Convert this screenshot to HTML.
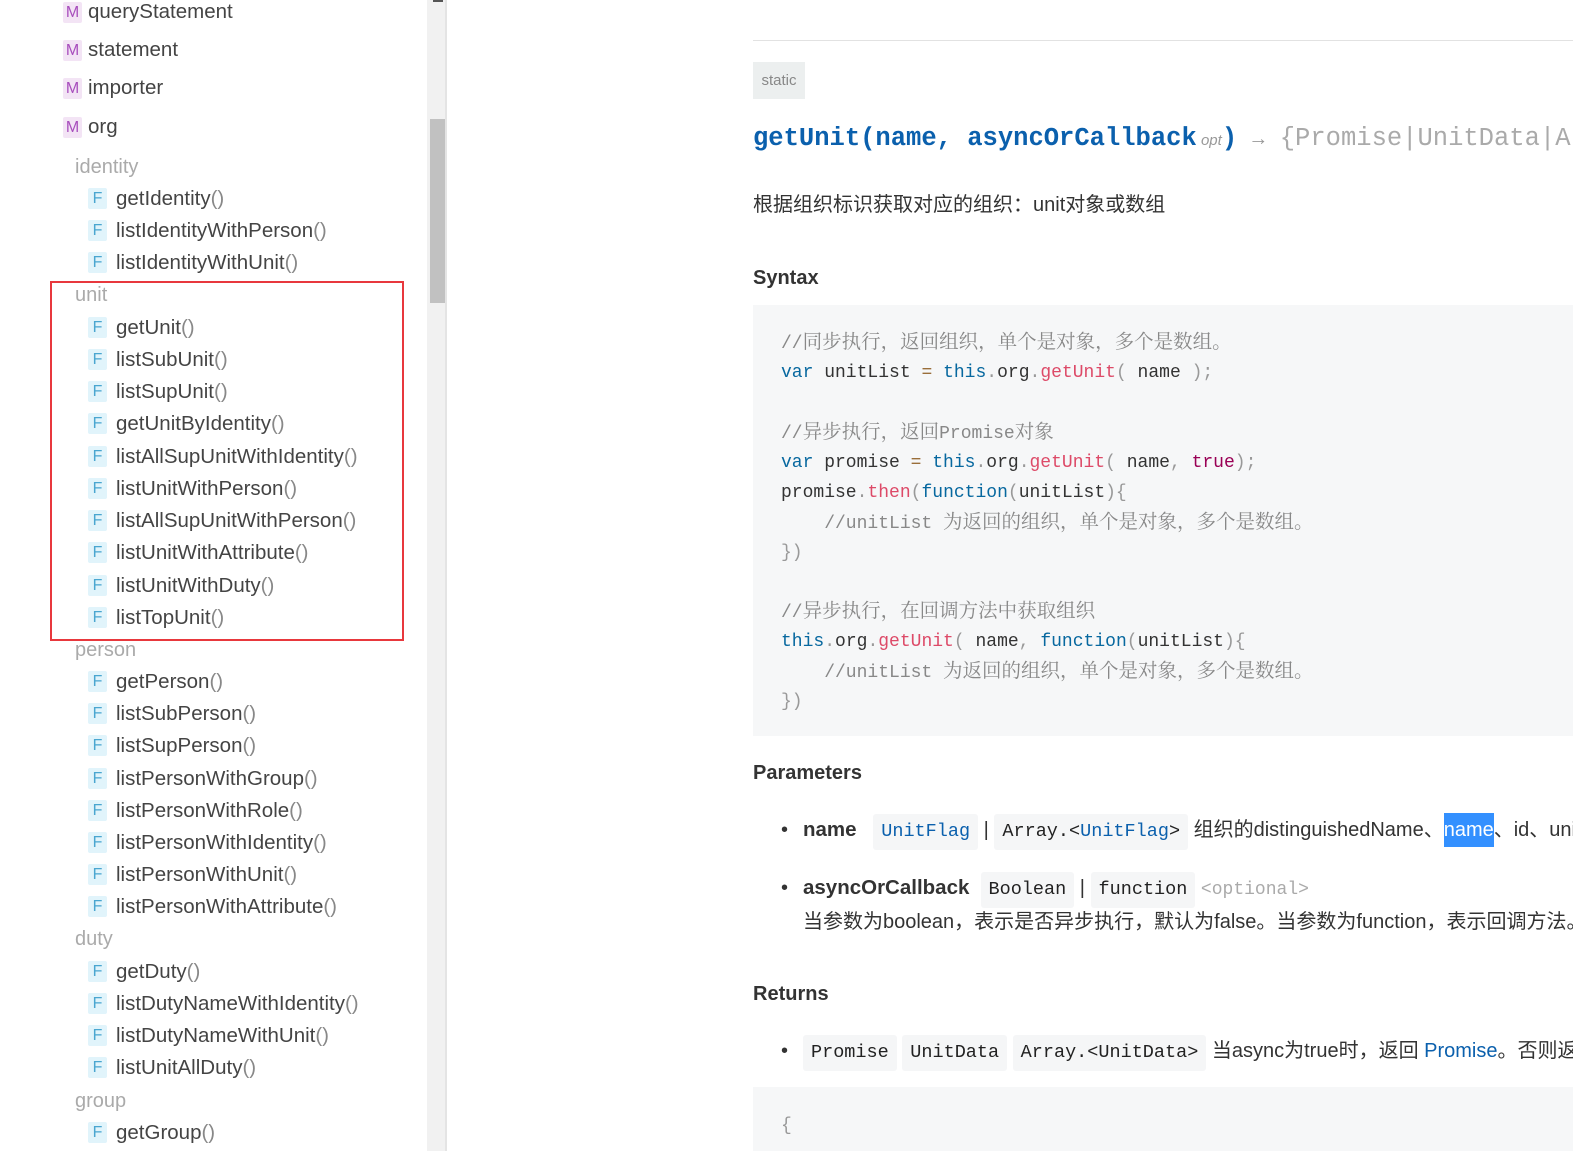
<!DOCTYPE html>
<html><head><meta charset="utf-8"><style>
*{margin:0;padding:0;box-sizing:border-box}
html,body{overflow:hidden}
body{width:1573px;height:1151px;background:#fff;position:relative;font-family:"Liberation Sans","Noto Sans CJK SC",sans-serif;color:#333}
.a{position:absolute;white-space:nowrap}
.si{position:absolute;white-space:nowrap;font-size:20.5px;color:#444;height:24px;line-height:24px}
.bd{position:absolute;width:19px;height:21px;border-radius:2px;font-size:16px;line-height:21px;text-align:center}
.m{background:#f3e4f5;color:#a84ebd}
.f{background:#e1f4fb;color:#4aa6d0}
.p{color:#888;font-weight:300}
.hd{position:absolute;font-size:20px;color:#aaa;line-height:24px}
.code{font-family:"Liberation Mono","Noto Serif CJK SC",monospace;font-size:18px}
.cl{position:absolute;left:781px;white-space:pre;line-height:24px}
.cm{color:#888}.kw{color:#07689f}.fn{color:#dd4a68}.pu{color:#999}.bo{color:#905}
.cj{font-size:19.5px}
.tg{display:inline-block;background:#f5f6f7;border-radius:3px;padding:0 8px;font-family:"Liberation Mono",monospace;font-size:18.5px;line-height:36px;color:#222}
h3{position:absolute;font-size:20px;font-weight:bold;color:#333;left:753px}
.clip{position:absolute;left:449px;top:0;width:1124px;height:1151px;overflow:hidden}
</style></head><body>
<!-- sidebar -->
<div class="a" style="left:427px;top:0;width:20px;height:1151px;background:#f1f1f1;border-right:2px solid #e4e4e4"></div>
<div class="a" style="left:430px;top:119px;width:15px;height:184px;background:#c1c1c1"></div>
<div class="a" style="left:433px;top:0;width:10px;height:2px;background:#555"></div>

<div class="bd m" style="left:63px;top:2px">M</div><div class="si" style="left:88px;top:0px">queryStatement</div>
<div class="bd m" style="left:63px;top:40px">M</div><div class="si" style="left:88px;top:38px">statement</div>
<div class="bd m" style="left:63px;top:78px">M</div><div class="si" style="left:88px;top:76px">importer</div>
<div class="bd m" style="left:63px;top:117px">M</div><div class="si" style="left:88px;top:115px">org</div>

<div class="hd" style="left:75px;top:155px">identity</div>
<div class="bd f" style="left:88px;top:188px">F</div><div class="si" style="left:116px;top:187px">getIdentity<span class="p">()</span></div>
<div class="bd f" style="left:88px;top:220px">F</div><div class="si" style="left:116px;top:219px">listIdentityWithPerson<span class="p">()</span></div>
<div class="bd f" style="left:88px;top:252px">F</div><div class="si" style="left:116px;top:251px">listIdentityWithUnit<span class="p">()</span></div>
<div class="hd" style="left:75px;top:283px">unit</div>
<div class="bd f" style="left:88px;top:317px">F</div><div class="si" style="left:116px;top:316px">getUnit<span class="p">()</span></div>
<div class="bd f" style="left:88px;top:349px">F</div><div class="si" style="left:116px;top:348px">listSubUnit<span class="p">()</span></div>
<div class="bd f" style="left:88px;top:381px">F</div><div class="si" style="left:116px;top:380px">listSupUnit<span class="p">()</span></div>
<div class="bd f" style="left:88px;top:413px">F</div><div class="si" style="left:116px;top:412px">getUnitByIdentity<span class="p">()</span></div>
<div class="bd f" style="left:88px;top:446px">F</div><div class="si" style="left:116px;top:445px">listAllSupUnitWithIdentity<span class="p">()</span></div>
<div class="bd f" style="left:88px;top:478px">F</div><div class="si" style="left:116px;top:477px">listUnitWithPerson<span class="p">()</span></div>
<div class="bd f" style="left:88px;top:510px">F</div><div class="si" style="left:116px;top:509px">listAllSupUnitWithPerson<span class="p">()</span></div>
<div class="bd f" style="left:88px;top:542px">F</div><div class="si" style="left:116px;top:541px">listUnitWithAttribute<span class="p">()</span></div>
<div class="bd f" style="left:88px;top:575px">F</div><div class="si" style="left:116px;top:574px">listUnitWithDuty<span class="p">()</span></div>
<div class="bd f" style="left:88px;top:607px">F</div><div class="si" style="left:116px;top:606px">listTopUnit<span class="p">()</span></div>
<div class="hd" style="left:75px;top:638px">person</div>
<div class="bd f" style="left:88px;top:671px">F</div><div class="si" style="left:116px;top:670px">getPerson<span class="p">()</span></div>
<div class="bd f" style="left:88px;top:703px">F</div><div class="si" style="left:116px;top:702px">listSubPerson<span class="p">()</span></div>
<div class="bd f" style="left:88px;top:735px">F</div><div class="si" style="left:116px;top:734px">listSupPerson<span class="p">()</span></div>
<div class="bd f" style="left:88px;top:768px">F</div><div class="si" style="left:116px;top:767px">listPersonWithGroup<span class="p">()</span></div>
<div class="bd f" style="left:88px;top:800px">F</div><div class="si" style="left:116px;top:799px">listPersonWithRole<span class="p">()</span></div>
<div class="bd f" style="left:88px;top:832px">F</div><div class="si" style="left:116px;top:831px">listPersonWithIdentity<span class="p">()</span></div>
<div class="bd f" style="left:88px;top:864px">F</div><div class="si" style="left:116px;top:863px">listPersonWithUnit<span class="p">()</span></div>
<div class="bd f" style="left:88px;top:896px">F</div><div class="si" style="left:116px;top:895px">listPersonWithAttribute<span class="p">()</span></div>
<div class="hd" style="left:75px;top:927px">duty</div>
<div class="bd f" style="left:88px;top:961px">F</div><div class="si" style="left:116px;top:960px">getDuty<span class="p">()</span></div>
<div class="bd f" style="left:88px;top:993px">F</div><div class="si" style="left:116px;top:992px">listDutyNameWithIdentity<span class="p">()</span></div>
<div class="bd f" style="left:88px;top:1025px">F</div><div class="si" style="left:116px;top:1024px">listDutyNameWithUnit<span class="p">()</span></div>
<div class="bd f" style="left:88px;top:1057px">F</div><div class="si" style="left:116px;top:1056px">listUnitAllDuty<span class="p">()</span></div>
<div class="hd" style="left:75px;top:1089px">group</div>
<div class="bd f" style="left:88px;top:1122px">F</div><div class="si" style="left:116px;top:1121px">getGroup<span class="p">()</span></div>

<div class="a" style="left:50px;top:281px;width:354px;height:360px;border:2px solid #e8383d"></div>

<!-- content -->
<div class="clip"><div style="position:absolute;left:-449px;top:0;width:1573px;height:1151px">
<div class="a" style="left:753px;top:40px;width:820px;height:1px;background:#e2e2e2"></div>
<div class="a" style="left:753px;top:62px;width:52px;height:37px;background:#ecefef;color:#888;font-size:15px;line-height:37px;text-align:center">static</div>
<div class="a" style="left:753px;top:121px;font-family:'Liberation Mono',monospace;font-size:25.5px;font-weight:bold;color:#0b60ad;line-height:36px">getUnit(name, asyncOrCallback<span style="font-size:15px;font-weight:normal;font-style:italic;color:#999;font-family:'Liberation Sans',sans-serif"> opt</span>) <span style="font-weight:normal;color:#999;font-size:20px">→</span> <span style="font-weight:normal;color:#aaa">{Promise|UnitData|Array}</span></div>
<div class="a" style="left:753px;top:192px;font-size:20px;color:#333;line-height:26px">根据组织标识获取对应的组织：unit对象或数组</div>
<h3 style="top:267px">Syntax</h3>
<div class="a code" style="left:753px;top:305px;width:820px;height:431px;background:#f6f7f8"></div>
<div class="code">
<div class="cl cm" style="top:331px">//<span class="cj">同步执行，返回组织，单个是对象，多个是数组。</span></div>
<div class="cl" style="top:361px"><span class="kw">var</span> unitList <span style="color:#9a6e3a">=</span> <span class="kw">this</span><span class="pu">.</span>org<span class="pu">.</span><span class="fn">getUnit</span><span class="pu">(</span> name <span class="pu">);</span></div>
<div class="cl cm" style="top:421px">//<span class="cj">异步执行，返回</span>Promise<span class="cj">对象</span></div>
<div class="cl" style="top:451px"><span class="kw">var</span> promise <span style="color:#9a6e3a">=</span> <span class="kw">this</span><span class="pu">.</span>org<span class="pu">.</span><span class="fn">getUnit</span><span class="pu">(</span> name<span class="pu">,</span> <span class="bo">true</span><span class="pu">);</span></div>
<div class="cl" style="top:481px">promise<span class="pu">.</span><span class="fn">then</span><span class="pu">(</span><span class="kw">function</span><span class="pu">(</span>unitList<span class="pu">){</span></div>
<div class="cl cm" style="top:511px">    //unitList <span class="cj">为返回的组织，单个是对象，多个是数组。</span></div>
<div class="cl pu" style="top:541px">})</div>
<div class="cl cm" style="top:600px">//<span class="cj">异步执行，在回调方法中获取组织</span></div>
<div class="cl" style="top:630px"><span class="kw">this</span><span class="pu">.</span>org<span class="pu">.</span><span class="fn">getUnit</span><span class="pu">(</span> name<span class="pu">,</span> <span class="kw">function</span><span class="pu">(</span>unitList<span class="pu">){</span></div>
<div class="cl cm" style="top:660px">    //unitList <span class="cj">为返回的组织，单个是对象，多个是数组。</span></div>
<div class="cl pu" style="top:690px">})</div>
</div>
<h3 style="top:762px">Parameters</h3>
<div class="a" style="left:781px;top:812px;font-size:20px;line-height:36px;color:#333">
<span style="display:inline-block;width:22px">•</span><b style="font-size:20.5px">name</b>&nbsp;&nbsp;&nbsp;<span class="tg" style="color:#0b60ad">UnitFlag</span> <span style="color:#333">|</span> <span class="tg">Array.&lt;<span style="color:#0b60ad">UnitFlag</span>&gt;</span> 组织的distinguishedName、<span style="background:#3390ff;color:#fff;display:inline-block;line-height:34px">name</span>、id、unique属性值，组织对象，或者上述属性值和对象的数组。</div>
<div class="a" style="left:781px;top:870px;font-size:20px;line-height:36px;color:#333">
<span style="display:inline-block;width:22px">•</span><b style="font-size:20.5px">asyncOrCallback</b>&nbsp;&nbsp;<span class="tg">Boolean</span> | <span class="tg">function</span> <span style="font-family:'Liberation Mono',monospace;font-size:18px;color:#aaa">&lt;optional&gt;</span></div>
<div class="a" style="left:803px;top:908px;font-size:20px;line-height:28px;color:#333">当参数为boolean，表示是否异步执行，默认为false。当参数为function，表示回调方法。</div>
<h3 style="top:983px">Returns</h3>
<div class="a" style="left:781px;top:1033px;font-size:20px;line-height:36px;color:#333">
<span style="display:inline-block;width:22px">•</span><span class="tg">Promise</span> <span class="tg">UnitData</span> <span class="tg">Array.&lt;UnitData&gt;</span> 当async为true时，返回 <span style="color:#0b60ad">Promise</span>。否则返回组织对象或数组。</div>
<div class="a" style="left:753px;top:1087px;width:820px;height:64px;background:#f6f7f8"></div>
<div class="a code pu" style="left:781px;top:1114px;line-height:24px">{</div>
</div></div>
</body></html>
